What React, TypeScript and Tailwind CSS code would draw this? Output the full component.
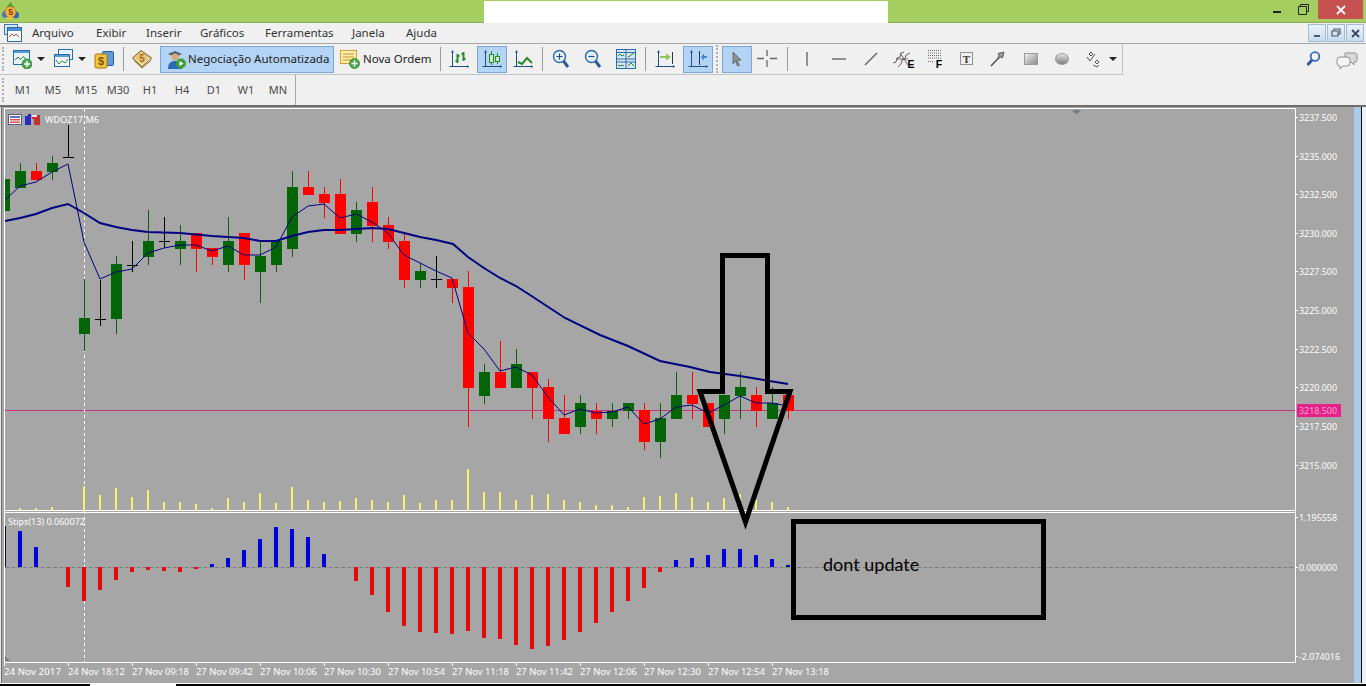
import React from "react";

type C = [number, "g" | "r" | "d", number, number, number, number];
const candles: C[] = [
  [20,"g",171,188,163,188],[36,"r",171,180,163,180],[52,"g",163,172,156,180],[68,"d",157,157,125,157],
  [84,"g",318,334,279,351],[100,"d",319,319,280,326],[116,"g",264,319,256,334],[132,"d",265,265,241,272],
  [148,"g",241,257,210,265],[164,"d",241,241,217,248],[180,"g",241,249,225,265],[196,"r",233,249,233,272],
  [212,"r",248,257,248,265],[228,"g",241,265,217,272],[244,"r",233,265,233,280],[260,"g",256,272,241,303],
  [276,"g",241,265,241,272],[292,"g",187,249,171,257],[308,"r",187,195,171,195],[324,"r",194,203,187,218],
  [340,"r",194,234,179,234],[356,"g",210,234,202,242],[372,"r",202,226,187,242],[388,"r",225,242,217,249],
  [404,"r",241,280,234,288],[420,"g",271,280,263,288],[436,"d",279,279,256,288],[452,"r",279,288,279,303],
  [468,"r",287,388,271,427],[484,"g",372,396,364,404],[500,"r",372,388,341,388],[516,"g",364,388,349,388],
  [532,"r",372,388,372,419],[548,"r",387,419,379,442],[564,"r",418,434,395,434],[580,"g",403,427,395,434],
  [596,"r",411,419,403,434],[612,"g",411,419,403,427],[628,"g",403,411,403,419],[644,"r",410,442,403,450],
  [660,"g",418,442,403,458],[676,"g",395,419,372,419],[692,"r",395,404,372,419],[708,"r",403,427,403,427],
  [724,"g",395,419,395,434],[740,"g",387,396,372,419],[756,"r",395,411,387,427],[772,"g",403,419,387,419],
  [788,"r",395,411,395,419],
];
const thin = "5,200 20,186 36,182 52,172 68,164 84,242 100,279 116,272 132,269 148,253 164,248 180,245 196,245 212,251 228,246 244,255 260,255 276,247 292,217 308,206 324,204 340,218 356,214 372,222 388,233 404,255 420,263 436,271 452,278 468,333 484,349 500,371 516,367 532,375 548,397 564,415 580,409 596,413 612,412 628,407 644,424 660,419 676,407 692,405 708,413 724,405 740,396 756,403 772,403 788,406";
const thick = "5,221 20,218 36,214 52,208 68,204 84,213 100,223 116,227 132,230 148,232 180,233 212,236 244,238 260,241 276,241 292,236 308,232 324,230 340,230 356,229 372,228 388,229 404,233 420,237 436,240 453,244 468,257 484,268 500,278 516,286 530,295 565,318 600,335 628,346 660,361 690,367 710,372 740,376 788,384";
const vol: [number, number][] = [[20,508],[36,508],[52,507],[84,486],[100,495],[116,488],[132,497],[148,490],[164,502],[180,502],[196,504],[212,508],[228,498],[244,502],[260,493],[276,503],[292,487],[308,500],[324,502],[340,501],[356,498],[372,500],[388,502],[404,495],[420,503],[436,500],[452,500],[468,469],[484,492],[500,492],[516,500],[532,495],[548,494],[564,500],[580,502],[596,505],[612,505],[628,507],[644,497],[660,496],[676,493],[692,497],[708,502],[724,498],[740,494],[756,500],[772,502],[788,507]];
const hist: [number, number][] = [[20,531],[36,547],[68,587],[84,601],[100,590],[116,580],[132,572],[148,570],[164,571],[180,572],[196,569],[212,564],[228,558],[244,550],[260,539],[276,527],[292,529],[308,537],[324,554],[356,581],[372,595],[388,612],[404,626],[420,632],[436,633],[452,634],[468,631],[484,638],[500,639],[516,645],[532,649],[548,646],[564,640],[580,632],[596,623],[612,612],[628,601],[644,588],[660,572],[676,560],[692,558],[708,555],[724,549],[740,549],[756,555],[772,559]];
const prices: [string, number][] = [["3237.500",117],["3235.000",156],["3232.500",194],["3230.000",233],["3227.500",271],["3225.000",310],["3222.500",349],["3220.000",387],["3217.500",426],["3215.000",465],["1.195558",517],["0.000000",567],["-2.074016",656]];
const times: [string, number][] = [["24 Nov 2017",4],["24 Nov 18:12",68],["27 Nov 09:18",132],["27 Nov 09:42",196],["27 Nov 10:06",260],["27 Nov 10:30",324],["27 Nov 10:54",388],["27 Nov 11:18",452],["27 Nov 11:42",516],["27 Nov 12:06",580],["27 Nov 12:30",644],["27 Nov 12:54",708],["27 Nov 13:18",772]];

const NS = "'Noto Sans', sans-serif";

function Chart() {
  return (
    <svg width="1354" height="576" viewBox="0 107 1354 576" className="block shrink-0">
      <rect x="0" y="107" width="1354" height="576" fill="#a6a6a6" />
      <rect x="0" y="107" width="1" height="576" fill="#e8e8e8" />
      <rect x="1" y="107" width="1" height="576" fill="#6e6e6e" />
      <g shapeRendering="crispEdges">
        <rect x="4" y="108" width="1292" height="1" fill="#fff" />
        <rect x="4" y="108" width="1" height="555" fill="#fff" />
        <rect x="1295" y="108" width="1" height="555" fill="#fff" />
        <rect x="4" y="510" width="1292" height="1" fill="#fff" />
        <rect x="4" y="512" width="1292" height="1" fill="#fff" />
        <rect x="4" y="662" width="1292" height="1" fill="#fff" />
        <rect x="5" y="410" width="1290" height="1" fill="#c4357f" />
        <line x1="5" y1="567.5" x2="1295" y2="567.5" stroke="#7b7b7b" strokeDasharray="4 2" />
        <line x1="84.5" y1="109" x2="84.5" y2="662" stroke="#fff" strokeDasharray="3 3" />
        {vol.map(([x, t]) => <rect key={x} x={x - 1} y={t} width="2" height={510 - t} fill="#f3f36a" />)}
        <rect x="5" y="526" width="1" height="41" fill="#000080" />
        {hist.map(([x, t]) => t < 567
          ? <rect key={x} x={x - 2} y={t} width="4" height={567 - t} fill="#0000d8" />
          : <rect key={x} x={x - 2} y="567" width="4" height={t - 567} fill="#e40a0a" />)}
        <rect x="786" y="565" width="4" height="2" fill="#000090" />
        <rect x="5" y="179" width="5" height="32" fill="#056405" />
        {candles.map(([x, k, a, b, hi, lo]) => {
          const fill = k === "g" ? "#056405" : k === "r" ? "#fe0000" : "#000";
          return (
            <g key={x} fill={fill}>
              <rect x={x} y={hi} width="1" height={lo - hi} />
              {k === "d"
                ? <rect x={x - 5} y={a} width="11" height="1" />
                : <rect x={x - 5} y={a} width="11" height={b - a} />}
            </g>
          );
        })}
      </g>
      <polyline points={thin} fill="none" stroke="#000080" strokeWidth="1" />
      <polyline points={thick} fill="none" stroke="#000080" strokeWidth="2" />
      <path d="M1072 110h9l-4.500 4.500z" fill="#747c84" />
      <path d="M5 656l5 5h-5z" fill="#7c7c7c" />
      <g>
        <rect x="8.500" y="114.500" width="13" height="10" fill="#fff" stroke="#5a5f78" />
        <rect x="10" y="116" width="10" height="2" fill="#6a6ad0" />
        <rect x="10" y="119" width="10" height="1.500" fill="#e05050" />
        <rect x="10" y="121.500" width="10" height="1.500" fill="#e05050" />
        <path d="M25 116h3v-2h3v11h-6z" fill="#2a2ac8" />
        <path d="M32 115h8v10h-6v-6h-2z" fill="#c83030" />
        <rect x="32" y="115" width="5" height="2" fill="#e8e8e8" />
      </g>
      <g fontFamily={NS} fontSize="9.5" fill="#fff">
        <text x="45" y="122.500" textLength="54" lengthAdjust="spacingAndGlyphs">WDOZ17,M6</text>
        <text x="8" y="524.500" textLength="77" lengthAdjust="spacingAndGlyphs">Stips(13) 0.060072</text>
        {prices.map(([p, y]) => (
          <g key={p}>
            <rect x="1295" y={y} width="3" height="1" shapeRendering="crispEdges" />
            <text x="1299" y={y + 3.500} textLength={p.startsWith("-") ? 41 : 38} lengthAdjust="spacingAndGlyphs">{p}</text>
          </g>
        ))}
        <rect x="1297" y="404" width="44" height="13" fill="#e8208c" />
        <text x="1299" y="414" fill="#f6a8d0" textLength="38" lengthAdjust="spacingAndGlyphs">3218.500</text>
        {times.map(([t, x]) => (
          <g key={t}>
            <rect x={x} y="662" width="1" height="4" shapeRendering="crispEdges" />
            <text x={x} y="674.500" textLength="57" lengthAdjust="spacingAndGlyphs">{t}</text>
          </g>
        ))}
      </g>
    </svg>
  );
}

const Axes = () => (
  <g stroke="#1c4f8c" fill="#1c4f8c" strokeWidth="1">
    <path d="M3.500 2v15.500M0.500 17.500h19" fill="none" />
    <path d="M2 3.500l1.500-2.500 1.500 2.500zM18 16l2 1.500-2 1.500z" stroke="none" />
  </g>
);
const Ic = ({ w = 20, children }: { w?: number; children: React.ReactNode }) => (
  <svg width={w} height="20" viewBox={`0 0 ${w} 20`} className="block shrink-0">{children}</svg>
);
const Plus = ({ cx, cy }: { cx: number; cy: number }) => (
  <g>
    <circle cx={cx} cy={cy} r="5" fill="#4aa84a" stroke="#2a7a2a" strokeWidth="0.700" />
    <path d={`M${cx - 3} ${cy}h6M${cx} ${cy - 3}v6`} stroke="#fff" strokeWidth="1.500" />
  </g>
);
const Caret = () => <div className="w-0 h-0 border-l-[4px] border-r-[4px] border-t-[4px] border-l-transparent border-r-transparent border-t-[#222]" />;
const Sep = () => <div className="w-px h-[24px] bg-[#9a9a9a]" />;

function NewChart() {
  return <Ic><rect x="1.500" y="1.500" width="16" height="14" fill="#e8f2fa" stroke="#2a6aa8" /><rect x="2" y="2" width="15" height="2" fill="#5a9ad0" /><path d="M3 11l3-3 2.500 2.500 3-3 2.500 3" fill="none" stroke="#2a7a2a" /><Plus cx={15} cy={15} /></Ic>;
}
function Profiles() {
  return <Ic><rect x="5.500" y="0.500" width="14" height="10" fill="#e8f2fa" stroke="#2a6aa8" /><rect x="1.500" y="5.500" width="15" height="12" fill="#f0f6fb" stroke="#2a6aa8" /><rect x="2" y="6" width="14" height="2" fill="#5a9ad0" /><path d="M3 11l3 4 3-3 3 2 3-4" fill="none" stroke="#2a8a2a" /></Ic>;
}
function Dollar() {
  return <Ic><rect x="8.500" y="2.500" width="11" height="14" rx="1" fill="#5f9bd8" stroke="#2a5a98" /><rect x="1" y="5" width="12" height="14" rx="1.500" fill="#f4c43c" stroke="#a07810" /><text x="7" y="16" textAnchor="middle" fontSize="11" fontFamily="'Liberation Sans',sans-serif" fontWeight="700" fill="#7a5200">$</text></Ic>;
}
function Book() {
  return <Ic><path d="M0.500 9L9 1.500 19.500 9 10 17.500z" fill="#e8c880" stroke="#7a5c20" /><path d="M2 11.500l8 7.500 9.500-8" fill="none" stroke="#8a6a24" /><path d="M3 10l7 6 8-6.500" fill="none" stroke="#fff4c8" /><text x="10" y="12.500" textAnchor="middle" fontSize="10" fontWeight="700" fontFamily="'Liberation Sans',sans-serif" fill="#b06a14">5</text></Ic>;
}
function Expert() {
  return <Ic w={22}><path d="M3 5l7-3 7 3-7 3z" fill="#55606a" /><circle cx="10" cy="8" r="3.500" fill="#d8a878" /><path d="M3 20c0-6 3-8 7-8s7 2 7 8z" fill="#2a68b8" /><circle cx="16" cy="14.500" r="5" fill="#3aa03a" /><path d="M14.500 12l4 2.500-4 2.500z" fill="#fff" /></Ic>;
}
function Order() {
  return <Ic><rect x="0.500" y="1.500" width="16" height="13" fill="#fdf0b0" stroke="#d8a030" /><path d="M3 5h11M3 8h11M3 11h9" stroke="#c89020" /><Plus cx={14.500} cy={14.500} /></Ic>;
}
const BarsI = () => <Ic><Axes /><path d="M8.500 5v9M6.500 12h2M8.500 7h2M14.500 3v9M12.500 5h2M14.500 10h2" stroke="#2a8a2a" strokeWidth="2" fill="none" /></Ic>;
const CandleI = () => <Ic><Axes /><path d="M9.500 2v14M15.500 4v11" stroke="#2a8a2a" /><rect x="7.500" y="5.500" width="4" height="8" fill="#cfe8c0" stroke="#2a8a2a" /><rect x="13.500" y="7.500" width="4" height="5" fill="#cfe8c0" stroke="#2a8a2a" /></Ic>;
const LineI = () => <Ic><Axes /><path d="M5 13l4 2 5-6 5 5" fill="none" stroke="#2a8a2a" strokeWidth="2" /></Ic>;
const ZoomI = ({ plus }: { plus?: boolean }) => (
  <Ic w={18}><circle cx="7.500" cy="7.500" r="6" fill="#e4f0fa" stroke="#2a6aa8" strokeWidth="1.400" /><path d={plus ? "M4.500 7.500h6M7.500 4.500v6" : "M4.500 7.500h6"} stroke="#2a4a78" strokeWidth="1.200" /><path d="M11.500 12l4.500 6" stroke="#2a5a98" strokeWidth="3" /></Ic>
);
const TileI = () => (
  <Ic><rect x="0.500" y="0.500" width="19" height="19" fill="#d8e8f4" stroke="#2a6aa8" /><path d="M0 3.500h20M0 10h20M0 13h20M10 0v20" stroke="#2a6aa8" /><path d="M2 7l2-2 2 2 2-1M12 8l2-1 2-2 2 0M2 16l2 1 2-1 2 1M12 17l3-3 3 3" fill="none" stroke="#2a7a2a" /></Ic>
);
const ShiftI = () => <Ic><Axes /><path d="M17.500 3v12" stroke="#334" /><path d="M5 7h6V4.500L16 8l-5 3.500V9H5z" fill="#8ac85a" /></Ic>;
const AutoI = () => <Ic><Axes /><path d="M11.500 2v14" stroke="#334" /><path d="M19 7h-3V4.500L13 8l3 3.500V9h3z" fill="#3a8ad8" /></Ic>;
const CursorI = () => <Ic w={14}><path d="M3 3l8 8-4 .5 2.500 5-2 .5-2-5L3 15z" fill="#8f8f8f" stroke="#555" strokeWidth="0.700" /></Ic>;
const CrossI = () => <Ic><path d="M10 1v6M10 11v7M0 9.500h7M13 9.500h7" stroke="#666" strokeWidth="1.300" /></Ic>;
const VLine = () => <Ic w={6}><path d="M3 3v14" stroke="#666" strokeWidth="1.400" /></Ic>;
const HLine = () => <Ic w={18}><path d="M2 10h14" stroke="#666" strokeWidth="1.400" /></Ic>;
const DLine = () => <Ic w={16}><path d="M2 16L14 4" stroke="#666" strokeWidth="1.400" /></Ic>;
const ChanE = () => (
  <Ic w={24}><path d="M1 14l3-1 1-4 3-1 1-4 3-1M6 18l3-3 1-4 3-1 1-4 4-2M4 10h12M8 4l8 12" fill="none" stroke="#555" strokeWidth="0.900" /><text x="19" y="18.500" textAnchor="middle" fontSize="10.500" fontWeight="700" fontFamily="'Liberation Sans',sans-serif" fill="#000">E</text></Ic>
);
const FibF = () => (
  <Ic w={18}><path d="M1 1.500h13M1 4h13M1 6.500h13M1 9h13" stroke="#666" strokeDasharray="1 1" /><path d="M1 12.500h6" stroke="#666" strokeDasharray="1 1" /><text x="12" y="18.500" textAnchor="middle" fontSize="10.500" fontWeight="700" fontFamily="'Liberation Sans',sans-serif" fill="#000">F</text></Ic>
);
const TextI = () => (
  <Ic w={15}><rect x="1.500" y="3.500" width="12" height="12" fill="none" stroke="#333" strokeDasharray="1 1" /><text x="7.500" y="14" textAnchor="middle" fontSize="11" fontWeight="700" fontFamily="'Liberation Serif',serif" fill="#333">T</text></Ic>
);
const ArrowI = () => <Ic w={15}><path d="M1 17L9 8.500" stroke="#444" strokeWidth="1.300" /><path d="M14 3l-1.500 6-1.500-1-2 1-1-1 1-2-1-1.500z" fill="#9a9a9a" stroke="#333" strokeWidth="0.700" /></Ic>;
const RectI = () => <div className="w-[14px] h-[12px] border border-[#999] bg-gradient-to-br from-[#f0f0f0] to-[#8c8c8c]" />;
const EllI = () => <div className="w-[14px] h-[12px] rounded-[50%] border border-[#999] bg-gradient-to-b from-[#e4e4e4] to-[#808080]" />;
const MiscI = () => (
  <Ic w={15}><path d="M5 3l2 2-2 2-2-2zM1 8l3 4 5-7M11 11l2 2-2 2-2-2zM7 16l4 2 2-2" fill="none" stroke="#555" strokeWidth="1" /></Ic>
);
const SearchI = () => <Ic w={15}><circle cx="9" cy="6.500" r="4.300" fill="#f4f8fc" stroke="#3a6ab8" strokeWidth="1.800" /><path d="M6 10l-4.500 5" stroke="#2a58a8" strokeWidth="2.800" /></Ic>;
const ChatI = () => <Ic w={22}><path d="M9 3h10a2 2 0 012 2v5a2 2 0 01-2 2h-1v3l-3-3H9z" fill="#d8d8d8" stroke="#909090" /><path d="M4 7h7a3 3 0 013 3v3a3 3 0 01-3 3H7l-3 3v-3a3 3 0 01-3-3v-3a3 3 0 013-3z" fill="#f4f4f4" stroke="#909090" /></Ic>;

const Logo = () => (
  <svg width="17" height="18" viewBox="0 0 17 18" className="block">
    <path d="M8.500 0l4.500 6.500h-9z" fill="#4aa040" />
    <circle cx="3.500" cy="12.500" r="3.500" fill="#3a7ac8" />
    <circle cx="13.500" cy="13" r="3.500" fill="#2a6ab0" />
    <circle cx="8.500" cy="10" r="5.500" fill="#f4b040" stroke="#b87010" strokeWidth="0.700" />
    <path d="M3 15.500l5.500 2.500 4.500-2-4.500-1.500z" fill="#e8c040" />
    <text x="8.500" y="13" textAnchor="middle" fontSize="8.500" fontWeight="700" fontFamily="'Liberation Sans',sans-serif" fill="#7a3c00">5</text>
  </svg>
);
const MenuIcon = () => (
  <svg width="18" height="18" viewBox="0 0 18 18" className="block">
    <rect x="0.500" y="0.500" width="13" height="10" fill="#d8e8f6" stroke="#3a78b8" />
    <rect x="3.500" y="3.500" width="14" height="14" fill="#f4f8fc" stroke="#2a68a8" />
    <rect x="4" y="4" width="13" height="3" fill="#4a90d0" />
    <path d="M5 13l3-3 2 2 2-2 3 3" fill="none" stroke="#d84830" />
  </svg>
);
const MdiBtn = ({ children }: { children: React.ReactNode }) => (
  <div className="w-[18px] h-[18px] border border-[#a4bcd2] bg-gradient-to-b from-[#eaf2f9] to-[#c8dcee] flex items-center justify-center">
    {children}
  </div>
);

export default function App() {
  const tf = "flex items-center justify-center h-full";
  return (
    <div className="w-[1366px] h-[686px] overflow-hidden flex flex-col bg-[#f0f0f0] text-[#333] font-['Noto_Sans',sans-serif]">
      {/* title bar */}
      <div className="h-[23px] shrink-0 bg-[#a4ce60] border-b border-[#8eab5e] flex items-start">
        <div className="ml-[2px] mt-[2px] w-[482px]"><Logo /></div>
        <div className="w-[404px] h-[22px] bg-white mt-px" />
        <div className="flex-1" />
        <div className="w-[8px] h-[2px] bg-[#222] mt-[11px]" />
        <svg width="11" height="11" viewBox="0 0 11 11" className="ml-[17px] mt-[4px] block"><path d="M2.500 2.500V.5h8v7h-2M.5 2.500h8v8h-8z" fill="none" stroke="#222" /></svg>
        <div className="ml-[9px] mr-[3px] w-[45px] h-[19px] bg-[#c75050] flex items-center justify-center">
          <svg width="10" height="10" viewBox="0 0 10 10" className="block"><path d="M1 1l8 8M9 1l-8 8" stroke="#fff" strokeWidth="1.800" /></svg>
        </div>
      </div>
      {/* menu */}
      <div className="h-[21px] shrink-0 border-b border-[#a8a8a8] flex items-center">
        <div className="ml-[4px] w-[28px]"><MenuIcon /></div>
        <div className="flex items-center text-[11.5px] text-[#333] whitespace-nowrap">
          <span className="w-[64px]">Arquivo</span>
          <span className="w-[50px]">Exibir</span>
          <span className="w-[54px]">Inserir</span>
          <span className="w-[65px]">Gráficos</span>
          <span className="w-[87px]">Ferramentas</span>
          <span className="w-[54px]">Janela</span>
          <span>Ajuda</span>
        </div>
        <div className="ml-auto mr-[2px] flex gap-px">
          <MdiBtn><div className="w-[6px] h-[2px] bg-[#4a5a70] mt-[6px]" /></MdiBtn>
          <MdiBtn>
            <svg width="10" height="10" viewBox="0 0 10 10" className="block"><path d="M3 3V1h6v5H7M1 3h6v5H1z" fill="none" stroke="#4a5a70" strokeWidth="1.200" /></svg>
          </MdiBtn>
          <MdiBtn>
            <svg width="9" height="9" viewBox="0 0 9 9" className="block"><path d="M1 1l7 7M8 1L1 8" stroke="#3a4a60" strokeWidth="1.800" /></svg>
          </MdiBtn>
        </div>
      </div>
      {/* toolbar */}
      <div className="h-[31px] shrink-0 flex items-center relative">
        <div className="w-[1123px] h-full flex items-center border-b border-r border-[#c4c4c4]">
          <div className="ml-[2px] h-[24px] border-l-2 border-dotted border-[#b0b0b0]" />
          <div className="ml-[8px]"><NewChart /></div>
          <div className="ml-[5px]"><Caret /></div>
          <div className="ml-[8px]"><Profiles /></div>
          <div className="ml-[5px]"><Caret /></div>
          <div className="ml-[8px]"><Dollar /></div>
          <div className="ml-[9px]"><Sep /></div>
          <div className="ml-[8px]"><Book /></div>
          <div className="ml-[8px] w-[174px] h-[27px] bg-[#b3d4f5] border border-[#7da6d4] flex items-center pl-[4px] text-[11.5px] text-[#222] whitespace-nowrap">
            <Expert /><span className="ml-[1px]">Negociação Automatizada</span>
          </div>
          <div className="ml-[6px]"><Order /></div>
          <span className="ml-[3px] w-[68px] text-[11.5px] text-[#222] whitespace-nowrap">Nova Ordem</span>
          <div className="ml-[9px]"><Sep /></div>
          <div className="ml-[8px]"><BarsI /></div>
          <div className="ml-[8px] w-[30px] h-[27px] bg-[#b3d4f5] border border-[#7da6d4] flex items-center justify-center"><CandleI /></div>
          <div className="ml-[6px]"><LineI /></div>
          <div className="ml-[9px]"><Sep /></div>
          <div className="ml-[9px]"><ZoomI plus /></div>
          <div className="ml-[14px]"><ZoomI /></div>
          <div className="ml-[14px]"><TileI /></div>
          <div className="ml-[9px]"><Sep /></div>
          <div className="ml-[9px]"><ShiftI /></div>
          <div className="ml-[8px] w-[30px] h-[27px] bg-[#b3d4f5] border border-[#7da6d4] flex items-center justify-center"><AutoI /></div>
          <div className="ml-[3px] h-[28px] border-l-2 border-dotted border-[#b0b0b0]" />
          <div className="ml-[4px] w-[30px] h-[27px] bg-[#b3d4f5] border border-[#7da6d4] flex items-center justify-center"><CursorI /></div>
          <div className="ml-[5px]"><CrossI /></div>
          <div className="ml-[10px]"><Sep /></div>
          <div className="ml-[16px]"><VLine /></div>
          <div className="ml-[20px]"><HLine /></div>
          <div className="ml-[15px]"><DLine /></div>
          <div className="ml-[13px]"><ChanE /></div>
          <div className="ml-[11px]"><FibF /></div>
          <div className="ml-[14px]"><TextI /></div>
          <div className="ml-[16px]"><ArrowI /></div>
          <div className="ml-[19px]"><RectI /></div>
          <div className="ml-[17px]"><EllI /></div>
          <div className="ml-[17px]"><MiscI /></div>
          <div className="ml-[8px]"><Caret /></div>
        </div>
        <div className="ml-auto mr-[8px] flex items-center">
          <SearchI />
          <div className="ml-[15px]"><ChatI /></div>
        </div>
      </div>
      {/* timeframes */}
      <div className="h-[30px] shrink-0 flex">
        <div className="w-[296px] h-full flex items-center border-r border-[#a8a8a8] pl-[2px]">
          <div className="h-[24px] border-l-2 border-dotted border-[#b0b0b0]" />
          <div className="ml-[4px] flex h-full text-[11px] text-[#4a4a4a]">
            <span className={`${tf} w-[30px]`}>M1</span>
            <span className={`${tf} w-[30px]`}>M5</span>
            <span className={`${tf} w-[32px] ml-[2px]`}>M15</span>
            <span className={`${tf} w-[32px]`}>M30</span>
            <span className={`${tf} w-[32px]`}>H1</span>
            <span className={`${tf} w-[32px]`}>H4</span>
            <span className={`${tf} w-[32px]`}>D1</span>
            <span className={`${tf} w-[32px]`}>W1</span>
            <span className={`${tf} w-[32px]`}>MN</span>
          </div>
        </div>
      </div>
      {/* chart workspace */}
      <div className="h-[2px] shrink-0 bg-[#6e6e6e]" />
      <div className="h-[576px] shrink-0 flex relative">
        <Chart />
        <div className="w-[7px] h-full bg-[#a9cbe8]" />
        <div className="w-px h-full bg-[#111]" />
        <div className="flex-1 h-full bg-[#f0f0f0]" />
        {/* annotations drawn over the chart */}
        <svg width="104" height="290" viewBox="695 250 104 290" className="absolute left-[695px] top-[143px] block">
          <path d="M722.500 255.500H767.500V391.500H790L745.500 522L700 391.500H722.500Z" fill="none" stroke="#000" strokeWidth="5" strokeLinejoin="miter" />
        </svg>
        <div className="absolute left-[791px] top-[412px] w-[255px] h-[101px] border-[5px] border-black">
          <span className="absolute left-[27px] top-[29px] text-[18px] leading-[22px] text-black whitespace-nowrap font-['Lato',sans-serif]">dont update</span>
        </div>
      </div>
      {/* bottom strip */}
      <div className="flex-1 flex flex-col">
        <div className="h-px bg-white" />
        <div className="flex-1 flex">
          <div className="w-[90px] bg-black" />
          <div className="w-[86px] bg-white" />
          <div className="flex-1 bg-black" />
        </div>
      </div>
    </div>
  );
}
